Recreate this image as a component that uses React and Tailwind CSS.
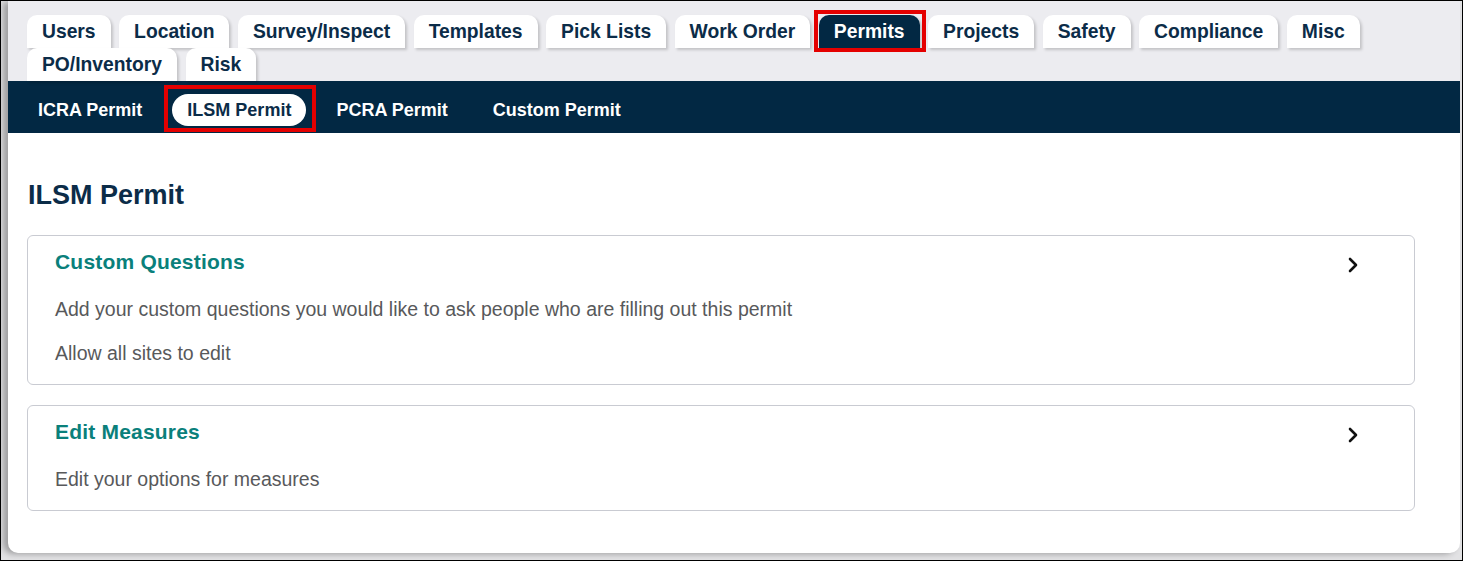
import { useState } from 'react'

const mainTabs = [
  'Users', 'Location', 'Survey/Inspect', 'Templates', 'Pick Lists', 'Work Order',
  'Permits', 'Projects', 'Safety', 'Compliance', 'Misc', 'PO/Inventory', 'Risk',
]

const permitTabs = ['ICRA Permit', 'ILSM Permit', 'PCRA Permit', 'Custom Permit']

function Chevron() {
  return (
    <svg width="12" height="18" viewBox="0 0 12 18" className="mt-[6px] shrink-0">
      <polyline points="3,3 9,9 3,15" fill="none" stroke="#111" strokeWidth="2.6" strokeLinecap="round" strokeLinejoin="round" />
    </svg>
  )
}

function SettingCard({ title, lines }) {
  return (
    <div className="rounded-[6px] border border-[#c9cbd2] bg-white pt-[14px] pb-[19px] pl-[27px] pr-[55px]">
      <div className="flex items-start justify-between">
        <h3 className="text-[21px] leading-[24px] font-bold tracking-[0.2px] text-[#0a807b]">{title}</h3>
        <Chevron />
      </div>
      {lines.map((l, i) => (
        <p key={i} className={`text-[19.5px] leading-[24px] text-[#58595b] ${i === 0 ? 'mt-[23px]' : 'mt-[20px]'}`}>{l}</p>
      ))}
    </div>
  )
}

export default function App() {
  const [tab, setTab] = useState('Permits')
  const [sub, setSub] = useState('ILSM Permit')

  return (
    <div className="w-[1463px] h-[561px] overflow-hidden border border-black bg-[#e2e2e4] font-['Liberation_Sans',Arial,sans-serif]">
      <div className="ml-[7px] mr-[2px] h-[552px] rounded-b-[10px] overflow-hidden bg-white shadow-[-5px_1px_6px_rgba(0,0,0,0.3)]">
        <div className="bg-[#ececf0] pl-[19px] pr-[20px] pt-[14px]">
          <div className="flex flex-wrap gap-x-[8.5px]">
            {mainTabs.map((t) => {
              const active = t === tab
              return (
                <button
                  key={t}
                  onClick={() => setTab(t)}
                  className={`relative h-[33px] px-[15px] pt-[1px] rounded-t-[10px] text-[19.3px] font-bold shadow-[2px_2px_3px_rgba(0,0,0,0.18)] ${active ? 'bg-[#022843] text-white' : 'bg-white text-[#0b2c48]'}`}
                >
                  {t}
                  {active && <span className="absolute -left-[5px] -right-[6px] -top-[5px] -bottom-[4px] border-4 border-[#e40000]" />}
                </button>
              )
            })}
          </div>
        </div>
        <div className="flex h-[52px] items-center gap-x-[15px] bg-[#022843] pl-[15px] pt-[6px]">
          {permitTabs.map((t) => {
            const active = t === sub
            return (
              <button
                key={t}
                onClick={() => setSub(t)}
                className={`relative h-[32px] px-[15px] rounded-full text-[18px] font-bold ${active ? 'bg-white text-[#0b2c48]' : 'text-white'}`}
              >
                {t}
                {active && <span className="absolute -left-[8px] -right-[10px] -top-[9px] -bottom-[6px] border-4 border-[#e40000]" />}
              </button>
            )
          })}
        </div>
        <div className="pl-[19px] pr-[45px] pt-[47px]">
          <h1 className="text-[27px] leading-[31px] font-bold text-[#0b2c48] pl-[1px]">ILSM Permit</h1>
          <div className="mt-[24px]">
            <SettingCard
              title="Custom Questions"
              lines={['Add your custom questions you would like to ask people who are filling out this permit', 'Allow all sites to edit']}
            />
          </div>
          <div className="mt-[20px]">
            <SettingCard title="Edit Measures" lines={['Edit your options for measures']} />
          </div>
        </div>
      </div>
    </div>
  )
}
